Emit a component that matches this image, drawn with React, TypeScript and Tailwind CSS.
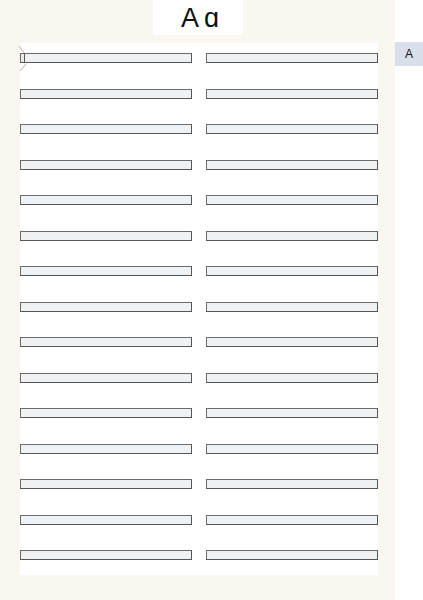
const rows = Array.from({ length: 15 }, (_, i) => i);

export default function App() {
  return (
    <div className="flex h-[600px] w-[423px] overflow-hidden bg-white font-['Liberation_Sans',sans-serif]">
      <div className="flex w-[395px] flex-col items-start bg-[#faf7f0]">
        <div className="flex h-[35px] w-[90px] items-center justify-center self-center bg-white pl-[10px] pt-[2px] text-[27px] leading-none tracking-[5px] text-[#111]">
          Aɑ
        </div>
        <div className="relative ml-[20px] mt-[8px] w-[358px] bg-white pb-[15px] pt-[10px]">
          <svg className="absolute left-[-2px] top-[2px]" width="12" height="28" viewBox="0 0 12 28">
            <path d="M1 1 L7 9" stroke="#999" strokeWidth="0.8" fill="none" />
            <path d="M8 19 L2 26" stroke="#999" strokeWidth="0.8" fill="none" />
          </svg>
          <div className="grid grid-cols-2 gap-x-[14px] gap-y-[25.5px]">
            {rows.map((r) => (
              <div key={r} className="contents">
                <div className="relative h-[10px] border border-[#6b6b6b] border-b-[#555] border-r-[#555] bg-[#eef2f4]">
                  {r === 0 && <div className="absolute left-0 top-0 h-full w-[4px] border-r border-[#555] bg-[#e8ecee]" />}
                </div>
                <div className="h-[10px] border border-[#6b6b6b] border-b-[#555] border-r-[#555] bg-[#eef2f4]" />
              </div>
            ))}
          </div>
        </div>
      </div>
      <div className="flex w-[28px] flex-col">
        <div className="mt-[42px] flex h-[24px] items-center justify-center bg-[#d8dfea] text-[12px] text-[#111]">
          A
        </div>
      </div>
    </div>
  );
}
